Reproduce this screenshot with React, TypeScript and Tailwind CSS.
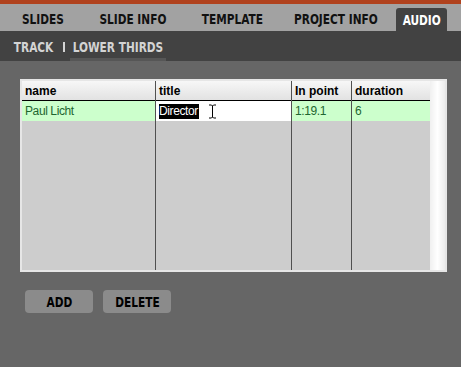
const condensed = { fontFamily: '"DejaVu Sans Condensed", "Liberation Sans", sans-serif' };
const sans = { fontFamily: '"Liberation Sans", Arial, sans-serif' };

const tabs = [
  { label: 'SLIDES', w: 'w-[86px]' },
  { label: 'SLIDE INFO', w: 'w-[94px]' },
  { label: 'TEMPLATE', w: 'w-[104px]' },
  { label: 'PROJECT INFO', w: 'w-[103px]' },
];

// squeezes DejaVu Condensed a little more so it reads like the heavy condensed UI face
function Cond({ children }: { children: React.ReactNode }) {
  return (
    <span className="inline-block whitespace-nowrap scale-x-[0.84] text-[14px] font-bold leading-none" style={condensed}>
      {children}
    </span>
  );
}

function IBeam() {
  return (
    <svg width="9" height="15" viewBox="0 0 9 15" className="absolute left-[52px] top-[3px]">
      <path d="M1 1h2.5l1 1 1-1H8M1 14h2.5l1-1 1 1H8M4.5 2v11" stroke="#000" strokeWidth="1" fill="none" />
    </svg>
  );
}

export default function App() {
  return (
    <div className="w-[461px] h-[367px] bg-[#666666] flex flex-col overflow-hidden" style={sans}>
      <div className="h-[4px] bg-[#b0421e]" />
      {/* main tabs */}
      <div className="h-[27px] bg-[#a2a2a2] flex items-end text-[#111]">
        {tabs.map((t) => (
          <div key={t.label} className={`${t.w} h-full flex items-center justify-center pt-[2px]`}>
            <Cond>{t.label}</Cond>
          </div>
        ))}
        <div className="ml-[9px] w-[51px] h-[23px] bg-[#424242] rounded-t-[3px] flex items-center justify-center text-white pt-[1px]">
          <Cond>AUDIO</Cond>
        </div>
      </div>
      {/* sub tabs */}
      <div className="h-[30px] bg-[#424242] flex items-stretch pl-[14px] text-[#d4d4d4]">
        <div className="w-[40px] flex items-center justify-center pt-[1px]">
          <Cond>TRACK</Cond>
        </div>
        <div className="ml-[3px] w-[13px] flex items-center justify-center pt-[1px]">
          <span className="w-[2px] h-[10px] bg-[#d4d4d4]" />
        </div>
        <div className="w-[96px] flex items-center justify-center border-b-[3px] border-[#565656] pt-[4px]">
          <Cond>LOWER THIRDS</Cond>
        </div>
      </div>
      {/* table */}
      <div className="mt-[18px] ml-[20px] w-[427px] h-[193px] border-2 border-[#e6e6e6] flex text-[12px] tracking-[-0.4px]">
        <Column width="w-[133px]" head="name" first>
          <div className="h-[20px] bg-[#ccffcc] text-[#1e6630] pl-[3px] flex items-center">Paul Licht</div>
        </Column>
        <Column width="w-[136px]" head="title">
          <div className="h-[20px] bg-white pl-[3px] flex items-center relative">
            <span className="bg-black text-white leading-[15px] pr-[1px]">Director</span>
            <IBeam />
          </div>
        </Column>
        <Column width="w-[60px]" head="In point">
          <div className="h-[20px] bg-[#ccffcc] text-[#1e6630] pl-[3px] flex items-center">1:19.1</div>
        </Column>
        <Column width="w-[79px]" head="duration">
          <div className="h-[20px] bg-[#ccffcc] text-[#1e6630] pl-[3px] flex items-center">6</div>
        </Column>
        <div className="w-[15px] h-full bg-gradient-to-r from-[#f0f0f0] via-white to-[#ececec]" />
      </div>
      {/* buttons */}
      <div className="mt-[18px] ml-[25px] flex gap-[10px]">
        <button className="w-[68px] h-[23px] rounded-[4px] bg-[#8b8b8b] text-black flex items-center justify-center pt-[1px]">
          <Cond>ADD</Cond>
        </button>
        <button className="w-[68px] h-[23px] rounded-[4px] bg-[#8b8b8b] text-black flex items-center justify-center pt-[1px]">
          <Cond>DELETE</Cond>
        </button>
      </div>
    </div>
  );
}

function Column({ width, head, first, children }: { width: string; head: string; first?: boolean; children: React.ReactNode }) {
  return (
    <div className={`${width} h-full flex flex-col ${first ? '' : 'border-l border-[#505050]'}`}>
      <div className="h-[20px] bg-gradient-to-b from-[#f7f7f7] to-[#e2e2e2] border-b border-black text-[12px] font-bold tracking-normal text-black pl-[3px] flex items-center">
        {head}
      </div>
      {children}
      <div className="flex-1 bg-[#cdcdcd]" />
    </div>
  );
}
